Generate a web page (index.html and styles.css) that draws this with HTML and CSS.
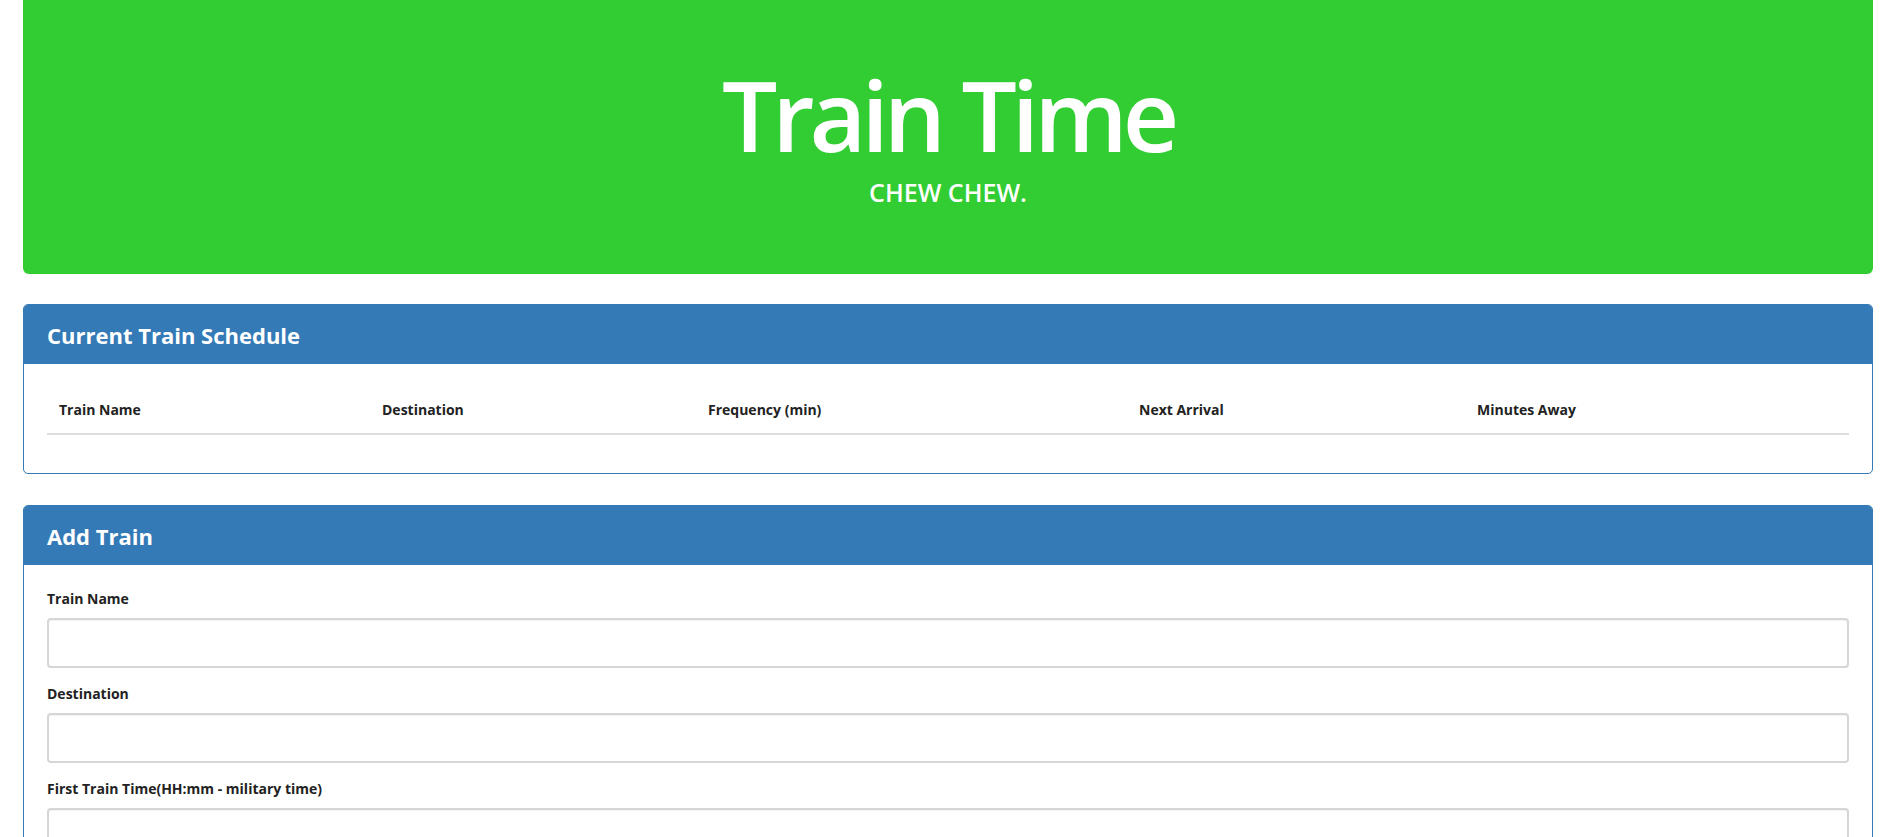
FILE: index.html
```html
<!DOCTYPE html>
<html lang="en">
<head>
<meta charset="utf-8">
<title>Train Time</title>
<link rel="stylesheet" href="styles.css">
</head>
<body>
<div class="page">
  <header class="jumbotron">
    <h1 class="title">Train Time</h1>
    <p class="subtitle">CHEW CHEW.</p>
  </header>

  <section class="panel panel-schedule">
    <div class="panel-heading"><h2 class="panel-title">Current Train Schedule</h2></div>
    <div class="panel-body">
      <table class="schedule">
        <colgroup>
          <col class="c1"><col class="c2"><col class="c3"><col class="c4"><col class="c5">
        </colgroup>
        <thead>
          <tr>
            <th>Train Name</th>
            <th>Destination</th>
            <th>Frequency (min)</th>
            <th>Next Arrival</th>
            <th>Minutes Away</th>
          </tr>
        </thead>
        <tbody></tbody>
      </table>
    </div>
  </section>

  <section class="panel panel-add">
    <div class="panel-heading"><h2 class="panel-title">Add Train</h2></div>
    <div class="panel-body form-body">
      <div class="form-group">
        <label class="label" for="name">Train Name</label>
        <input class="input" id="name" type="text">
      </div>
      <div class="form-group">
        <label class="label" for="dest">Destination</label>
        <input class="input" id="dest" type="text">
      </div>
      <div class="form-group">
        <label class="label" for="first">First Train Time(HH:mm - military time)</label>
        <input class="input" id="first" type="text">
      </div>
      <div class="form-group">
        <label class="label" for="freq">Frequency (min)</label>
        <input class="input" id="freq" type="text">
      </div>
    </div>
  </section>
</div>
</body>
</html>
```

FILE: styles.css
```css
* { box-sizing: border-box; }
html, body { margin: 0; padding: 0; background: #fff; }
body {
  font-family: "Open Sans", "Noto Sans", "Liberation Sans", sans-serif;
  color: #222;
}
.page {
  padding: 0 9px 40px 23px;
}
.jumbotron {
  background: #32cd32;
  color: #fff;
  height: 274px;
  border-radius: 0 0 6px 6px;
  padding-top: 54px;
  text-align: center;
}
.title {
  margin: 0;
  font-size: 98px;
  line-height: 120px;
  font-weight: 600;
  letter-spacing: -5px;
}
.subtitle {
  margin: 3px 0 0;
  font-size: 25px;
  line-height: 30px;
  font-weight: 600;
}
.panel {
  border: 1px solid #337ab7;
  border-radius: 5px;
  overflow: hidden;
  background: #fff;
}
.panel-schedule { margin-top: 30px; }
.panel-add { margin-top: 31px; }
.panel-heading {
  background: #337ab7;
  height: 59px;
  padding: 2px 23px 0;
}
.panel-title {
  margin: 0;
  color: #fff;
  font-size: 22px;
  line-height: 57px;
  font-weight: 700;
}
.panel-body {
  padding: 36px 23px 38px;
}
.schedule {
  width: 100%;
  border-collapse: collapse;
  table-layout: fixed;
}
.c1 { width: 323px; }
.c2 { width: 326px; }
.c3 { width: 431px; }
.c4 { width: 338px; }
.c5 { width: auto; }
.schedule th {
  text-align: left;
  font-size: 14px;
  line-height: 20px;
  font-weight: 700;
  color: #222;
  padding: 0 12px 13px;
  border-bottom: 2px solid #ddd;
}
.form-body {
  padding: 24px 23px 20px;
}
.form-group {
  margin-bottom: 16px;
}
.label {
  display: block;
  font-size: 14px;
  line-height: 20px;
  font-weight: 700;
  color: #222;
  margin-bottom: 9px;
}
.input {
  display: block;
  width: 100%;
  height: 50px;
  border: 2px solid #d4d6d8;
  border-radius: 4px;
  box-shadow: inset 0 1px 1px rgba(0,0,0,0.06);
  background: #fff;
  font: inherit;
  padding: 6px 12px;
}
```
